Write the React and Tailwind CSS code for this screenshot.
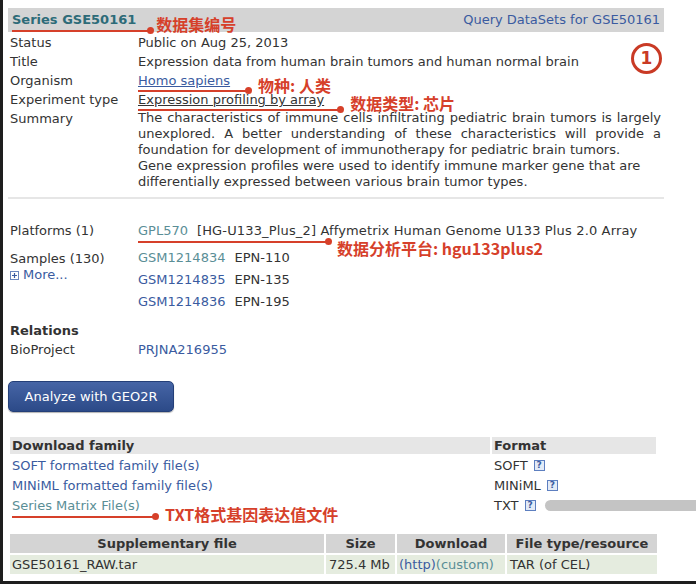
import React from 'react'

// red annotation text laid over the page, placed from the point where it sits
function Note({ children, x = 0, y = 0 }) {
  return (
    <span className="relative inline-block w-0 h-[19px] align-top">
      <span
        className="absolute whitespace-nowrap font-['Noto_Sans_CJK_SC','DejaVu_Sans',sans-serif] font-bold text-[16px] leading-none text-[#d6402a]"
        style={{ left: x, top: y }}
      >
        {children}
      </span>
    </span>
  )
}

// red underline with a dot at its end, drawn over the text
function RedLine({ width, top }) {
  return (
    <span className="absolute left-0 flex items-center pointer-events-none" style={{ top, width }}>
      <span className="h-[2px] flex-1 bg-[#d6402a]" />
      <span className="w-[7px] h-[7px] rounded-full bg-[#d6402a] -ml-[2px]" />
    </span>
  )
}

function Help() {
  return (
    <span className="inline-flex items-center justify-center w-[11px] h-[11px] ml-[6px] border border-[#5d7fc0] bg-[#e3ebf7] text-[9px] font-bold leading-none text-[#3a5ba0] align-middle relative -top-[1px]">
      ?
    </span>
  )
}

const Row = ({ label, children, className = '' }) => (
  <div className={`grid grid-cols-[128px_1fr] leading-[19px] ${className}`}>
    <div>{label}</div>
    <div>{children}</div>
  </div>
)

export default function App() {
  return (
    <div className="w-[696px] h-[584px] relative overflow-hidden bg-white border-l-[3px] border-b-[3px] border-[#1e1e1e] font-['DejaVu_Sans','Liberation_Sans',sans-serif] text-[13px] text-[#333]">
      <div className="pt-[8px] pl-[5px] w-[661px]">

        {/* HEADER */}
        <div className="h-[24px] w-[656px] bg-[#d4d4d4] flex items-center justify-between pl-[4px] pr-[4px]">
          <div className="flex items-center">
            <span className="relative font-bold text-[#2d6b78] text-[13px]">
              Series GSE50161
              <RedLine width={142} top={17} />
            </span>
            <Note x={20} y={5}>数据集编号</Note>
          </div>
          <span className="text-[#3a5ba0]">Query DataSets for GSE50161</span>
        </div>

        {/* DETAILS */}
        <div className="pl-[2px] pt-[1px] relative w-[653px]">
          <Row label="Status">Public on Aug 25, 2013</Row>
          <Row label="Title">Expression data from human brain tumors and human normal brain</Row>
          <Row label="Organism">
            <span className="relative">
              <span className="text-[#3a5ba0] underline">Homo sapiens</span>
              <RedLine width={114} top={14} />
            </span>
            <Note x={28} y={6}>物种: 人类</Note>
          </Row>
          <Row label="Experiment type">
            <span className="relative">
              <span className="underline">Expression profiling by array</span>
              <RedLine width={206} top={14} />
            </span>
            <Note x={26} y={5}>数据类型: 芯片</Note>
          </Row>
          <div className="grid grid-cols-[128px_1fr]">
            <div className="leading-[19px]">Summary</div>
            <div className="leading-[16px] pt-[1px] text-justify">
              <p>The characteristics of immune cells infiltrating pediatric brain tumors is largely unexplored. A better understanding of these characteristics will provide a foundation for development of immunotherapy for pediatric brain tumors.</p>
              <p className="text-left">Gene expression profiles were used to identify immune marker gene that are differentially expressed between various brain tumor types.</p>
            </div>
          </div>

          {/* circled number */}
          <span className="absolute right-[-1px] top-[11px] w-[31px] h-[31px] rounded-full border-[3px] border-[#c93a25] flex items-center justify-center text-[#c93a25] font-bold text-[17px] leading-none">
            1
          </span>
        </div>

        <div className="mt-[7px] h-[2px] w-[656px] bg-[#e6e6e6]" />

        {/* PLATFORMS / SAMPLES */}
        <div className="pl-[2px] mt-[22px]">
          <Row label="Platforms (1)">
            <Note x={199} y={19}>数据分析平台: hgu133plus2</Note>
            <span className="relative">
              <span className="text-[#5a8e96]">GPL570</span>
              <RedLine width={194} top={15} />
            </span>
            <span className="ml-[9px] tracking-[0.15px]">[HG-U133_Plus_2] Affymetrix Human Genome U133 Plus 2.0 Array</span>
          </Row>

          <div className="grid grid-cols-[128px_1fr] mt-[7px]">
            <div className="leading-[16px] pt-[4px]">
              <div>Samples (130)</div>
              <div className="flex items-center text-[#3a5ba0]">
                <svg width="9" height="9" viewBox="0 0 9 9" className="mr-[4px]">
                  <rect x="0.5" y="0.5" width="8" height="8" fill="#fff" stroke="#6b86bd" />
                  <path d="M2 4.5h5M4.5 2v5" stroke="#3a5ba0" strokeWidth="1.2" />
                </svg>
                More...
              </div>
            </div>
            <div className="leading-[22px]">
              <div><span className="text-[#5a8e96]">GSM1214834</span><span className="ml-[9px]">EPN-110</span></div>
              <div><span className="text-[#3a5ba0]">GSM1214835</span><span className="ml-[9px]">EPN-135</span></div>
              <div><span className="text-[#3a5ba0]">GSM1214836</span><span className="ml-[9px]">EPN-195</span></div>
            </div>
          </div>

          <div className="mt-[8px] font-bold leading-[19px]">Relations</div>
          <Row label="BioProject">
            <span className="text-[#3a5ba0]">PRJNA216955</span>
          </Row>
        </div>

        {/* BUTTON */}
        <button className="mt-[22px] w-[166px] h-[31px] rounded-[5px] bg-gradient-to-b from-[#4665a6] to-[#2c4a88] border border-[#243f78] text-white text-[13px] shadow-[0_1px_1px_rgba(0,0,0,0.3)]">
          Analyze with GEO2R
        </button>

        {/* DOWNLOAD FAMILY */}
        <div className="mt-[25px] ml-[2px] w-[646px]">
          <div className="grid grid-cols-[480px_1fr] gap-x-[2px] leading-[17px] font-bold">
            <div className="bg-[#e6e6e6] pl-[2px]">Download family</div>
            <div className="bg-[#e6e6e6] pl-[2px]">Format</div>
          </div>
          <div className="grid grid-cols-[480px_1fr] gap-x-[2px] leading-[20px] mt-[2px]">
            <div className="pl-[2px] text-[#3a5ba0]">SOFT formatted family file(s)</div>
            <div className="pl-[2px]">SOFT<Help /></div>
            <div className="pl-[2px] text-[#3a5ba0]">MINiML formatted family file(s)</div>
            <div className="pl-[2px]">MINiML<Help /></div>
            <div className="pl-[2px]">
              <Note x={153} y={10}>TXT格式基因表达值文件</Note>
              <span className="relative text-[#5a8e96]">
                Series Matrix File(s)
                <RedLine width={147} top={15} />
              </span>
            </div>
            <div className="pl-[2px]">TXT<Help /></div>
          </div>
        </div>

        {/* SUPPLEMENTARY */}
        <div className="mt-[18px] ml-[2px] w-[647px]">
          <div className="grid grid-cols-[314px_69px_108px_1fr] gap-[2px] leading-[19px]">
            <div className="bg-[#d4d4d4] font-bold text-center">Supplementary file</div>
            <div className="bg-[#d4d4d4] font-bold text-center">Size</div>
            <div className="bg-[#d4d4d4] font-bold text-center">Download</div>
            <div className="bg-[#d4d4d4] font-bold text-center">File type/resource</div>
            <div className="bg-[#e5ecdf] pl-[2px]">GSE50161_RAW.tar</div>
            <div className="bg-[#e5ecdf] pl-[3px]">725.4 Mb</div>
            <div className="bg-[#e5ecdf] pl-[2px]">
              <span className="text-[#3a5ba0]">(http)</span><span className="text-[#5a8e96]">(custom)</span>
            </div>
            <div className="bg-[#e5ecdf] pl-[3px]">TAR (of CEL)</div>
          </div>
        </div>
      </div>

      {/* grey bar overlay from the recording */}
      <span className="absolute left-[542px] top-[500px] w-[160px] h-[11px] rounded-l-full bg-[#c4c4c4]" />
    </div>
  )
}
